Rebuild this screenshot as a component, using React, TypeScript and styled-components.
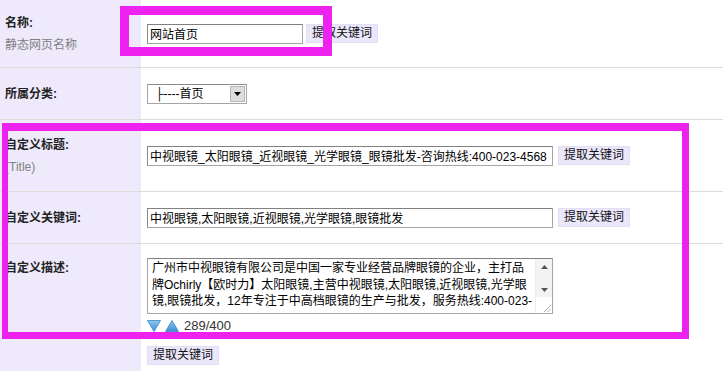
import React from "react"
import styled, { createGlobalStyle } from "styled-components"

const GlobalStyle = createGlobalStyle`
  html, body {
    margin: 0;
    padding: 0;
    background: #ffffff;
    overflow: hidden;
  }
  body {
    font-family: "Liberation Sans", "Noto Sans CJK SC", sans-serif;
    font-size: 12px;
    color: #000;
  }
`

const LAVENDER = "#eeeafc"
const MAGENTA = "#ee22ee"

const Page = styled.div`
  position: relative;
  width: 723px;
  height: 371px;
  overflow: hidden;
`

const Row = styled.div<{ $h: number; $last?: boolean }>`
  display: grid;
  grid-template-columns: 141px 1fr;
  min-height: ${(p) => p.$h}px;
  border-bottom: ${(p) => (p.$last ? "none" : "1px solid #dcdcdc")};
`

const LabelCell = styled.div<{ $top?: boolean }>`
  background: ${LAVENDER};
  padding-left: 5px;
  display: flex;
  flex-direction: column;
  justify-content: ${(p) => (p.$top ? "flex-start" : "center")};
  padding-top: ${(p) => (p.$top ? "14px" : "0")};
`

const LabelText = styled.div`
  font-weight: bold;
  font-size: 12px;
  line-height: 20px;
  color: #222;
`

const SubLabel = styled.div`
  font-size: 12px;
  line-height: 20px;
  margin-top: 2px;
  color: #808080;
`

const ValueCell = styled.div<{ $top?: boolean }>`
  padding-left: 6px;
  display: flex;
  flex-direction: ${(p) => (p.$top ? "column" : "row")};
  align-items: ${(p) => (p.$top ? "flex-start" : "center")};
  padding-top: ${(p) => (p.$top ? "14px" : "0")};
`

const TextInput = styled.input<{ $w: number }>`
  box-sizing: border-box;
  width: ${(p) => p.$w}px;
  height: 20px;
  border: 1px solid #a6a6a6;
  border-top-color: #808080;
  border-left-color: #8a8a8a;
  padding: 0 2px;
  font-family: "Liberation Sans", "Noto Sans CJK SC", sans-serif;
  font-size: 12px;
  color: #000;
  background: #fff;
  outline: none;
`

const KeyButton = styled.button<{ $gap?: number }>`
  box-sizing: border-box;
  height: 19px;
  margin-left: ${(p) => p.$gap ?? 0}px;
  padding: 0 5px;
  border: 1px solid #e2def6;
  background: #ebe7fb;
  font-family: "Liberation Sans", "Noto Sans CJK SC", sans-serif;
  font-size: 12px;
  line-height: 17px;
  color: #111;
  cursor: pointer;
`

const SelectBox = styled.div`
  box-sizing: border-box;
  width: 100px;
  height: 20px;
  border: 1px solid #a5a5a5;
  border-top-color: #8c8c8c;
  display: flex;
  align-items: center;
  background: #fff;
  padding: 1px;
`

const SelectText = styled.span`
  flex: 1;
  padding-left: 6px;
  font-family: "Liberation Sans", "DejaVu Sans", "Noto Sans CJK SC", sans-serif;
  font-size: 12px;
  line-height: 16px;
  white-space: nowrap;
`

const SelectArrow = styled.span`
  box-sizing: border-box;
  width: 15px;
  height: 16px;
  background: #dedede;
  border: 1px solid #b5b5b5;
  display: flex;
  align-items: center;
  justify-content: center;
`

const AreaBox = styled.div`
  box-sizing: border-box;
  width: 406px;
  height: 56px;
  border: 1px solid #a6a6a6;
  border-top-color: #808080;
  display: flex;
  background: #fff;
`

const DescArea = styled.textarea`
  box-sizing: border-box;
  width: 388px;
  height: 54px;
  border: none;
  padding: 1px 3px 0 4px;
  margin: 0;
  resize: none;
  overflow: hidden;
  outline: none;
  font-family: "Liberation Sans", "Noto Sans CJK SC", sans-serif;
  font-size: 12px;
  line-height: 16.5px;
  color: #000;
  background: #fff;
`

const ScrollCol = styled.div`
  width: 16px;
  display: flex;
  flex-direction: column;
  border-left: 1px solid #eeeeee;
`

const ScrollTrack = styled.div`
  height: 38px;
  background: #f3f3f3;
  display: flex;
  flex-direction: column;
  justify-content: space-between;
  align-items: center;
  padding: 6px 0 5px;
  box-sizing: border-box;
`

const Grip = styled.div`
  flex: 1;
  display: flex;
  align-items: flex-end;
  justify-content: flex-end;
  padding: 0 1px 1px 0;
`

const CounterRow = styled.div`
  display: flex;
  align-items: center;
  gap: 4px;
  margin-top: 5px;
  height: 14px;
`

const Counter = styled.span`
  font-family: "Liberation Sans", sans-serif;
  font-size: 13px;
  line-height: 14px;
  color: #333;
  margin-left: 1px;
`

const BottomButton = styled(KeyButton)`
  margin-top: 13px;
`

const Marker = styled.div<{ $l: number; $t: number; $w: number; $h: number; $bw: string }>`
  position: absolute;
  box-sizing: border-box;
  left: ${(p) => p.$l}px;
  top: ${(p) => p.$t}px;
  width: ${(p) => p.$w}px;
  height: ${(p) => p.$h}px;
  border-style: solid;
  border-color: ${MAGENTA};
  border-width: ${(p) => p.$bw};
  pointer-events: none;
`

const Triangle = ({ up }: { up?: boolean }) => (
  <svg width="14" height="12" viewBox="0 0 14 12">
    <defs>
      <linearGradient id={up ? "gu" : "gd"} x1="0" y1="0" x2="0" y2="1">
        <stop offset="0" stopColor="#8cc8f0" />
        <stop offset="1" stopColor="#3d8fd2" />
      </linearGradient>
    </defs>
    <polygon
      points={up ? "7,0.5 13.5,11.5 0.5,11.5" : "0.5,0.5 13.5,0.5 7,11.5"}
      fill={`url(#${up ? "gu" : "gd"})`}
      stroke="#3a86c8"
      strokeWidth="0.8"
    />
  </svg>
)

const descText =
  "广州市中视眼镜有限公司是中国一家专业经营品牌眼镜的企业，主打品牌Ochirly【欧时力】太阳眼镜,主营中视眼镜,太阳眼镜,近视眼镜,光学眼镜,眼镜批发，12年专注于中高档眼镜的生产与批发，服务热线:400-023-4568"

export default function App() {
  return (
    <>
      <GlobalStyle />
      <Page>
        <Row $h={67}>
          <LabelCell>
            <LabelText>名称:</LabelText>
            <SubLabel>静态网页名称</SubLabel>
          </LabelCell>
          <ValueCell>
            <TextInput $w={156} defaultValue="网站首页" />
            <KeyButton $gap={3}>提取关键词</KeyButton>
          </ValueCell>
        </Row>

        <Row $h={51}>
          <LabelCell>
            <LabelText>所属分类:</LabelText>
          </LabelCell>
          <ValueCell>
            <SelectBox>
              <SelectText>├----首页</SelectText>
              <SelectArrow>
                <svg width="7" height="4" viewBox="0 0 7 4">
                  <polygon points="0,0 7,0 3.5,4" fill="#000" />
                </svg>
              </SelectArrow>
            </SelectBox>
          </ValueCell>
        </Row>

        <Row $h={71}>
          <LabelCell>
            <LabelText>自定义标题:</LabelText>
            <SubLabel>(Title)</SubLabel>
          </LabelCell>
          <ValueCell>
            <TextInput
              $w={406}
              defaultValue="中视眼镜_太阳眼镜_近视眼镜_光学眼镜_眼镜批发-咨询热线:400-023-4568"
            />
            <KeyButton $gap={5}>提取关键词</KeyButton>
          </ValueCell>
        </Row>

        <Row $h={51}>
          <LabelCell>
            <LabelText>自定义关键词:</LabelText>
          </LabelCell>
          <ValueCell>
            <TextInput $w={406} defaultValue="中视眼镜,太阳眼镜,近视眼镜,光学眼镜,眼镜批发" />
            <KeyButton $gap={5}>提取关键词</KeyButton>
          </ValueCell>
        </Row>

        <Row $h={127} $last>
          <LabelCell $top>
            <LabelText>自定义描述:</LabelText>
          </LabelCell>
          <ValueCell $top>
            <AreaBox>
              <DescArea readOnly defaultValue={descText} />
              <ScrollCol>
                <ScrollTrack>
                  <svg width="7" height="4" viewBox="0 0 7 4">
                    <polygon points="3.5,0 7,4 0,4" fill="#555" />
                  </svg>
                  <svg width="7" height="4" viewBox="0 0 7 4">
                    <polygon points="0,0 7,0 3.5,4" fill="#555" />
                  </svg>
                </ScrollTrack>
                <Grip>
                  <svg width="8" height="8" viewBox="0 0 8 8">
                    <line x1="1" y1="8" x2="8" y2="1" stroke="#999" strokeWidth="0.8" />
                    <line x1="4.5" y1="8" x2="8" y2="4.5" stroke="#999" strokeWidth="0.8" />
                  </svg>
                </Grip>
              </ScrollCol>
            </AreaBox>
            <CounterRow>
              <Triangle />
              <Triangle up />
              <Counter>289/400</Counter>
            </CounterRow>
            <BottomButton>提取关键词</BottomButton>
          </ValueCell>
        </Row>

        <Marker $l={120} $t={6} $w={212} $h={50} $bw="9px" />
        <Marker $l={2} $t={123} $w={687} $h={216} $bw="8px 7px 7px 6px" />
      </Page>
    </>
  )
}
